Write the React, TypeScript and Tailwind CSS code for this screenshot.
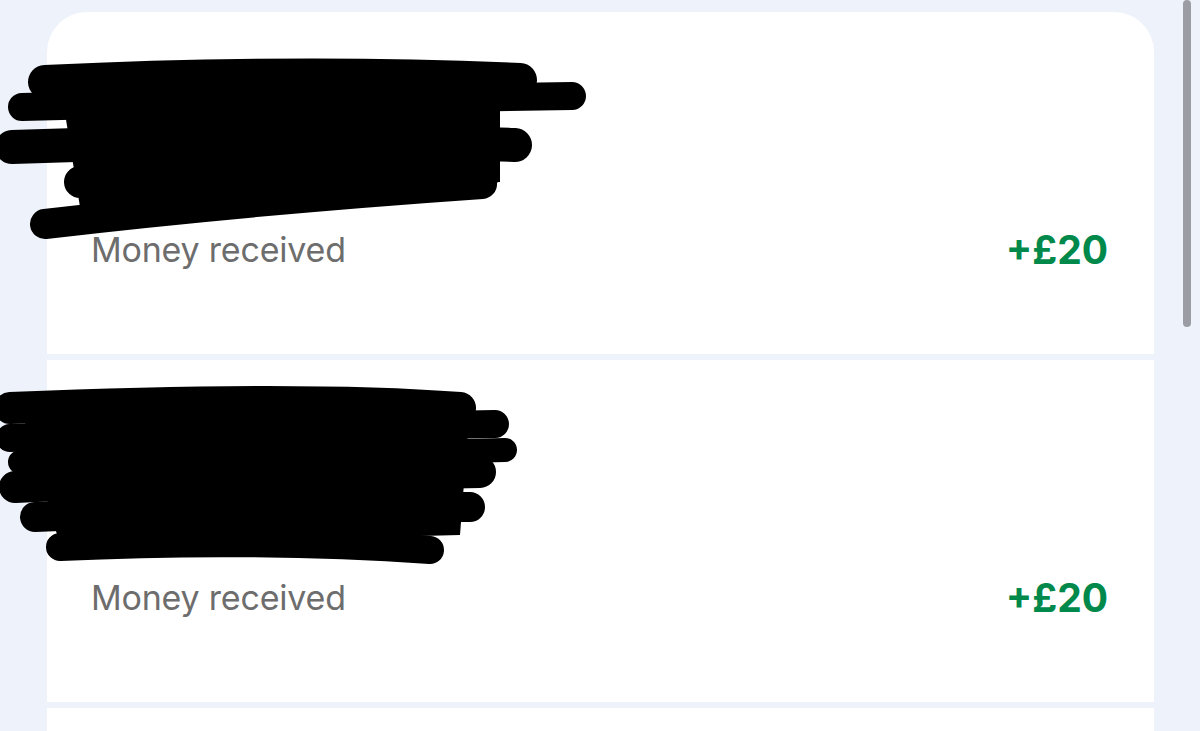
const Scribble = ({ strokes, fill }: { strokes: { d: string; w: number }[]; fill: string }) => (
  <svg
    className="absolute left-[-47px] top-0 pointer-events-none"
    width="640"
    height="342"
    viewBox="0 0 640 342"
  >
    <polygon points={fill} fill="#000" />
    {strokes.map((s, i) => (
      <path
        key={i}
        d={s.d}
        fill="none"
        stroke="#000"
        strokeWidth={s.w}
        strokeLinecap="round"
        strokeLinejoin="round"
      />
    ))}
  </svg>
);

const rows = [
  {
    strokes: [
      { d: "M45 70 Q300 58 520 68", w: 34 },
      { d: "M22 95 Q300 88 572 84", w: 28 },
      { d: "M12 135 Q300 125 515 133", w: 34 },
      { d: "M80 170 Q300 160 482 166", w: 32 },
      { d: "M45 212 Q250 188 482 172", w: 30 },
    ],
    fill: "60,70 500,70 500,170 80,195",
  },
  {
    strokes: [
      { d: "M10 48 Q300 36 460 48", w: 32 },
      { d: "M10 78 Q300 68 495 64", w: 28 },
      { d: "M20 102 Q300 94 505 90", w: 24 },
      { d: "M15 127 Q300 115 480 112", w: 32 },
      { d: "M35 157 Q300 146 470 147", w: 30 },
      { d: "M60 187 Q250 178 430 190", w: 28 },
    ],
    fill: "20,45 470,45 460,175 60,185",
  },
];

export default function App() {
  return (
    <div
      className="relative h-[731px] overflow-hidden bg-[#eef2fa] pl-[47px] pr-[46px] pt-[12px]"
      style={{ fontFamily: "Inter, 'Liberation Sans', sans-serif" }}
    >
      <div className="flex flex-col gap-[6px]">
        {rows.map((row, i) => (
          <div
            key={i}
            className={`relative h-[342px] bg-white px-[44px] pt-[218px] ${i === 0 ? "rounded-t-[40px]" : ""}`}
          >
            <div className="flex items-center justify-between leading-[40px]">
              <span className="text-[34px] text-[#6d6d6d] tracking-[-0.2px]">Money received</span>
              <span className="text-[39px] font-bold text-[#00894a] mr-[2px]">+£20</span>
            </div>
            <Scribble strokes={row.strokes} fill={row.fill} />
          </div>
        ))}
        <div className="h-[342px] bg-white" />
      </div>
      <div className="absolute right-[9px] top-0 h-[327px] w-[8px] rounded-full bg-[#9b9ca4]" />
    </div>
  );
}
